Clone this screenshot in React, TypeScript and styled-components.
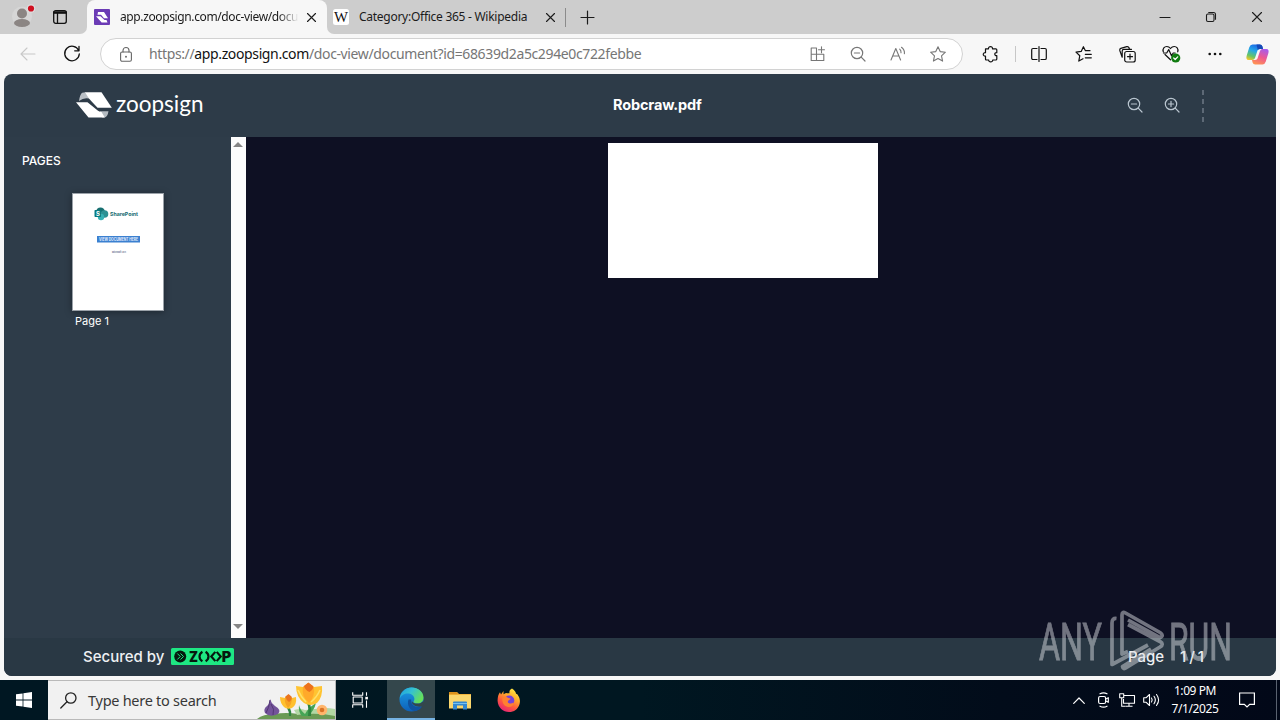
import React from "react";
import styled, { createGlobalStyle, css } from "styled-components";

const system = '"Noto Sans", "Open Sans", sans-serif';
const brand = 'Inter, "Open Sans", sans-serif';

const GlobalStyle = createGlobalStyle`
  *, *::before, *::after { box-sizing: border-box; }
  body { margin: 0; width: 1280px; height: 720px; overflow: hidden; background: #f7f7f7; font-family: ${system}; }
  svg { display: block; flex: none; overflow: visible; }
`;

const Desktop = styled.div`
  position: relative;
  width: 1280px;
  height: 720px;
  display: flex;
  flex-direction: column;
  background: #f7f7f7;
`;

const Slot = styled.div<{ $w: number; $ml?: number }>`
  flex: none;
  width: ${(p) => p.$w}px;
  height: 100%;
  margin-left: ${(p) => p.$ml ?? 0}px;
  display: flex;
  align-items: center;
  justify-content: center;
`;

const Spacer = styled.div`
  flex: 1;
`;

/* Tab strip */

const TabStrip = styled.div`
  flex: none;
  height: 34px;
  display: flex;
  align-items: center;
  background: linear-gradient(90deg, #cdcdcd 80px, #f7f7f7 80px, #f7f7f7 336px, #cdcdcd 336px);
`;

const StripStart = styled.div`
  width: 87px;
  height: 34px;
  flex: none;
  display: flex;
  background: #cdcdcd;
  border-bottom-right-radius: 7px;
`;

const TabBacking = styled.div`
  width: 240px;
  height: 34px;
  flex: none;
  background: linear-gradient(180deg, #cdcdcd 17px, #f7f7f7 17px);
`;

const StripRest = styled.div`
  flex: 1;
  height: 34px;
  display: flex;
  align-items: center;
  background: #cdcdcd;
  border-bottom-left-radius: 7px;
`;

const Tab = styled.div<{ $active?: boolean }>`
  width: 240px;
  height: 34px;
  flex: none;
  display: flex;
  align-items: center;
  padding-left: ${(p) => (p.$active ? 7 : 6)}px;
  border-radius: 8px 8px 0 0;
  background: ${(p) => (p.$active ? "#f7f7f7" : "transparent")};
`;

const TabTitle = styled.div<{ $fade?: boolean }>`
  width: 180px;
  margin-left: 10px;
  overflow: hidden;
  white-space: nowrap;
  font-size: 12px;
  line-height: 18px;
  color: #1b1b1b;
  letter-spacing: ${(p) => (p.$fade ? "-0.38px" : "-0.27px")};
  ${(p) =>
    p.$fade &&
    css`
      mask-image: linear-gradient(90deg, #000 158px, transparent 179px);
    `}
`;

const Divider = styled.div<{ $h: number; $c: string }>`
  flex: none;
  width: 1px;
  height: ${(p) => p.$h}px;
  background: ${(p) => p.$c};
`;

/* Toolbar */

const Toolbar = styled.div`
  flex: none;
  height: 40px;
  display: flex;
  align-items: center;
  padding-left: 6px;
`;

const AddressBar = styled.div`
  flex: none;
  width: 863px;
  height: 32px;
  margin-left: 6px;
  display: flex;
  align-items: center;
  padding: 0 4px 0 13px;
  border: 1px solid #d2d2d2;
  border-radius: 16px;
  background: #fff;
`;

const Url = styled.div`
  flex: 1;
  margin-left: 11px;
  white-space: nowrap;
  font-size: 14px;
  line-height: 20px;
  letter-spacing: -0.37px;
  color: #767676;
  b { font-weight: 400; color: #111; }
`;

/* Document viewer */

const Viewer = styled.main`
  flex: none;
  width: 1272px;
  height: 602px;
  margin: 0 4px 4px;
  display: flex;
  flex-direction: column;
  overflow: hidden;
  border-radius: 8px;
  background: #2d3b48;
  font-family: ${brand};
  color: #fff;
`;

const ViewerHeader = styled.header`
  flex: none;
  height: 63px;
  display: flex;
  align-items: center;
  padding: 0 72px 1px 72px;
`;

const Brand = styled.div`
  width: 537px;
  display: flex;
  align-items: center;
`;

const BrandName = styled.span`
  margin: -2px 0 0 4px;
  font-family: Lato, sans-serif;
  font-size: 22.5px;
  line-height: 30px;
`;

const FileName = styled.h1`
  margin: 0;
  font-size: 14.5px;
  font-weight: 700;
  line-height: 20px;
  letter-spacing: -0.14px;
  white-space: nowrap;
`;

const DashedRule = styled.div`
  width: 2px;
  height: 33px;
  margin: 2px 0 0 12px;
  background: repeating-linear-gradient(180deg, #5d6976 0 5px, transparent 5px 9px);
`;

const ViewerBody = styled.div`
  flex: none;
  height: 501px;
  display: flex;
`;

const Sidebar = styled.aside`
  width: 227px;
  display: flex;
  flex-direction: column;
  padding: 14px 0 0 18px;
  background: #2e3c49;
`;

const SidebarTitle = styled.h2`
  margin: 0;
  font-size: 12px;
  font-weight: 500;
  line-height: 20px;
  letter-spacing: 0;
`;

const Thumb = styled.div`
  width: 92px;
  height: 118px;
  margin: 22px 0 0 50px;
  border: 1px solid #9ba2a9;
  background: #fff;
  box-shadow: 0 1px 7px rgba(0, 0, 0, 0.35);
`;

const ThumbLabel = styled.span`
  margin: 2px 0 0 53px;
  font-size: 11px;
  line-height: 16px;
`;

const ScrollTrack = styled.div`
  width: 15px;
  display: flex;
  flex-direction: column;
  align-items: flex-start;
  justify-content: space-between;
  padding: 5px 0 9px 2px;
  background: #fcfcfc;
`;

const Canvas = styled.section`
  flex: 1;
  padding: 6px 0 0 362px;
  background: #0e1023;
`;

const BlankPage = styled.div`
  width: 270px;
  height: 135px;
  background: #fff;
`;

const ViewerFooter = styled.footer`
  flex: 1;
  display: flex;
  align-items: center;
  padding: 0 71px 1px 79px;
  background: #293844;
  font-size: 15px;
  font-weight: 500;
  line-height: 20px;
  color: #eef0f3;
`;

const SecuredBy = styled.span`
  width: 88px;
  white-space: nowrap;
  letter-spacing: 0;
`;

const PageWord = styled.span`
  width: 52px;
`;

const PageCount = styled.span`
  width: 25px;
  white-space: nowrap;
  letter-spacing: -0.5px;
`;

/* Watermark over the recording */

const Watermark = styled.div`
  position: absolute;
  left: 1036px;
  top: 606px;
  opacity: 0.48;
`;

/* Taskbar */

const Taskbar = styled.div`
  flex: none;
  height: 40px;
  display: flex;
  align-items: center;
  background: linear-gradient(90deg, #001722 0, #001721 640px, #020c1a 1000px, #020818 1280px);
`;

const SearchBox = styled.div`
  width: 288px;
  height: 40px;
  flex: none;
  display: flex;
  align-items: center;
  border: 1px solid #b9b9b9;
  border-left: 0;
  background: #f1f1f1;
`;

const SearchText = styled.span`
  width: 169px;
  font-size: 14.5px;
  line-height: 20px;
  letter-spacing: -0.27px;
  white-space: nowrap;
  color: #383838;
`;

const ActiveApp = styled.div`
  width: 48px;
  height: 40px;
  margin-left: 3px;
  display: flex;
  align-items: center;
  justify-content: center;
  background: #34474c;
  border-bottom: 2px solid #76b3e3;
`;

const Clock = styled.div`
  width: 70px;
  margin-left: -4px;
  text-align: center;
  font-size: 12px;
  line-height: 18px;
  letter-spacing: -0.42px;
  color: #fff;
`;

const ShowDesktop = styled.div`
  width: 4px;
  height: 40px;
  border-left: 1px solid #5a6270;
`;

type IconProps = {
  w?: number;
  h?: number;
  color?: string;
  sw?: number;
  children: React.ReactNode;
};

const Icon = ({ w = 20, h = 20, color = "#1b1b1b", sw = 1.1, children }: IconProps) => (
  <svg
    width={w}
    height={h}
    viewBox={`0 0 ${w} ${h}`}
    fill="none"
    stroke={color}
    strokeWidth={sw}
    strokeLinecap="round"
    strokeLinejoin="round"
  >
    {children}
  </svg>
);

const Close = ({ size = 9 }: { size?: number }) => (
  <Icon w={size} h={size}>
    <path d={`M.5.5l${size - 1} ${size - 1}M${size - 0.5}.5l-${size - 1} ${size - 1}`} />
  </Icon>
);

const ZoomGlyph = ({ plus, color }: { plus?: boolean; color: string }) => (
  <Icon w={16} h={16} color={color} sw={1.2}>
    <circle cx="7" cy="7" r="5.7" />
    <path d="M11.2 11.2l3.8 3.8M4.4 7h5.2" />
    {plus && <path d="M7 4.400v5.200" />}
  </Icon>
);

const LogoMark = () => (
  <svg width="36" height="26" viewBox="0 0 36 26">
    <path d="M3 9Q4 2 6.200.8L9.500.3L15.500 7.500Q9 4.500 3 9z" fill="#b9bfc5" />
    <path d="M9 .3H25.500L35.800 15.700H21.500L14.500 8.300Q13 6.500 12.500 5.800z" fill="#fff" />
    <path d="M24 19.300H32.500Q31.500 25.300 28.500 25.500H26z" fill="#b4bbc1" />
    <path d="M0 10.300H11.500L22 18.800Q23.200 19.800 25.500 20L28.800 25.500H12.500z" fill="#fff" />
  </svg>
);

const EdgeLogo = () => (
  <svg width="25" height="25" viewBox="0 0 25 25">
    <defs>
      <linearGradient id="edgeTop" x1="0" y1="0" x2="1" y2=".5">
        <stop offset="0" stopColor="#1b9de2" />
        <stop offset=".5" stopColor="#35c1d1" />
        <stop offset="1" stopColor="#66df5a" />
      </linearGradient>
      <linearGradient id="edgeBody" x1="0" y1="0" x2="0" y2="1">
        <stop offset="0" stopColor="#1b9ee6" />
        <stop offset="1" stopColor="#0e60b8" />
      </linearGradient>
    </defs>
    <circle cx="12.500" cy="12.500" r="12" fill="url(#edgeBody)" />
    <path d="M.6 12C1.500 5 6.500.5 12.600.5C19.500.5 24.500 5 24.500 10.500c0 4-3 6-6 6c-2.500 0-4-1-4-1.800c0-.6.900-1 .9-2.700C15.400 8.500 12 6.500 8.500 6.500C4.500 6.500 1.500 9 .6 12z" fill="url(#edgeTop)" />
    <path d="M9.500 12.500C7.500 18 11 24 16 24c3 0 6-2.200 7.300-5c-2 1.200-5 1.400-7.300.4c-3-1.200-4.300-4-3.800-6.900z" fill="#10529e" />
    <path d="M13 14.200c.5 1.700 2.800 2.400 5.500 2.300c2.300 0 4.500-.9 6-2.600c.8 2.500.2 4.700-.6 5.200c-2.900 1.400-7.100.7-9.100-1c-1.900-1.500-2.600-3.400-1.800-3.900z" fill="#34474c" />
  </svg>
);

const FirefoxLogo = () => (
  <svg width="24" height="25" viewBox="0 0 24 25">
    <defs>
      <linearGradient id="fox" x1=".8" y1="0" x2=".25" y2="1">
        <stop offset="0" stopColor="#fff044" />
        <stop offset=".35" stopColor="#ffab2b" />
        <stop offset=".65" stopColor="#ff5a3c" />
        <stop offset="1" stopColor="#e52079" />
      </linearGradient>
    </defs>
    <path d="M15 .5c3 2 4 4.200 4 5.200c1.200.4 2 1.100 2.200 2c2 2.800 2 6.300 1.300 8.500C21 21.200 17 24 12 24C6 24 1 19.500.6 13C.5 9 1.500 6 3 4.200l1 2.400L6.500 3v3.200L9 5c1.500.3 2.500.3 3.500.2C12 3 13 1.500 15 .5z" fill="url(#fox)" />
    <circle cx="12.300" cy="12.500" r="5" fill="#7542d8" />
    <path d="M5.500 9.500c2-1.200 4-.6 5.500.2c1 .6 2.500.5 2.500 1c0 1-2 1.200-2.500 2.300c-1 2.500 3 3.500 5.500 1.500c.5 2.500-2 4.500-5 4.500C7.500 19 4.500 15 5.500 9.500z" fill="#ff8130" />
  </svg>
);

const CopilotLogo = () => (
  <svg width="23" height="21" viewBox="0 0 23 21">
    <defs>
      <linearGradient id="cpA" x1=".6" y1="0" x2=".2" y2="1">
        <stop offset="0" stopColor="#1a65e5" />
        <stop offset=".4" stopColor="#25a8e8" />
        <stop offset=".75" stopColor="#67c565" />
        <stop offset="1" stopColor="#f0c72c" />
      </linearGradient>
      <linearGradient id="cpB" x1=".7" y1="0" x2=".3" y2="1">
        <stop offset="0" stopColor="#a95bea" />
        <stop offset=".5" stopColor="#ee5891" />
        <stop offset="1" stopColor="#ff9353" />
      </linearGradient>
    </defs>
    <path d="M6.500.5h7.300q2 0 2.600 2l.6 2.500h-3c-1.800 0-2.400 1-2.900 2.700l-2 6.100C8.500 15.500 7.500 16 6 16H2.500C.5 16 0 14 .6 12L3.200 3.500Q4.200.5 6.500.5z" fill="url(#cpA)" />
    <path d="M16.500 20.500H9.200q-2 0-2.600-2L6 16h3c1.800 0 2.400-1 2.900-2.700l2-6.100C14.500 5.500 15.500 5 17 5h3.500c2 0 2.500 2 1.900 4l-2.600 8.500q-1 3-3.300 3z" fill="url(#cpB)" />
    <path d="M10.500.5h3.300q2 0 2.600 2L17 5h-3c-1 0-1.700.4-2.200 1z" fill="#1748b5" />
  </svg>
);

const Flowers = () => (
  <svg width="78" height="38" viewBox="0 0 78 38">
    <path d="M0 38Q6 33 18 33Q28 31 42 33Q60 30 78 34V38z" fill="#6a9a54" />
    <path d="M37 29Q44 27 48 29L58 28Q68 26 78 28V35Q60 31 40 34z" fill="#b3d7a4" />
    <path d="M42 24q1 5 6 9q3-6 11-11q-2 8-8 13h-6q-4-4-3-11" fill="#46a556" />
    <path d="M51 35q1-8-1-13h3q2 6 1 13M32 35q0-5-2-8h3q2 4 1 8" fill="#2f8540" />
    <path d="M13 18q0 5-3 7q-4 3-2 7q5 5 13 1q4-4-3-8q-4-3-5-7z" fill="#73539a" />
    <path d="M13 19q-1 8-4 13M14 23q4 5 2 11" stroke="#523675" strokeWidth="1" fill="none" />
    <path d="M23 16l5 1l4-3l3 3l4-1q1 8-4 11q-5 2-8-1q-4-4-4-10z" fill="#ffc02f" />
    <path d="M28 16l3-2l4 3q0 6-4 10q-4-5-3-11z" fill="#f6a324" />
    <path d="M28.500 15.500l3-2.500l3 2.500q1 3-2.500 5.500q-3-2-3.500-5.500z" fill="#ea741e" />
    <path d="M39 5l7 1l5-4l6 4l8-1q1 11-5 17q-7 4-13 0q-8-6-8-17z" fill="#ffc331" />
    <path d="M46 6l5-4l6 4q1 10-5 16q-8-7-6-16z" fill="#ffa92a" />
    <path d="M47 5l4.500-3.500L56 5q1 3-3.500 6Q48 9 47 5z" fill="#ec721e" />
    <path d="M41 9q3 7 8 12M63 9q-3 7-9 12" stroke="#ffe06a" strokeWidth="1.600" fill="none" />
    <circle cx="65" cy="29" r="5.300" fill="#ffb56c" />
    <circle cx="65" cy="29" r="2.300" fill="#d97225" />
  </svg>
);

const ZoopBadge = () => (
  <svg width="63" height="17" viewBox="0 0 63 17">
    <rect width="63" height="17" rx="1.500" fill="#1ee783" />
    <circle cx="9.200" cy="8.500" r="6" fill="#06180f" />
    <path d="M6.300 5.500l3 3l-3 3M9.500 5.500l3 3l-3 3" fill="none" stroke="#1ee783" strokeWidth="1" />
    <g fill="none" stroke="#06180f" strokeWidth="2.200">
      <path d="M31.400 3.700q-2.900 1.800-2.900 4.800t2.900 4.800M34.600 3.700q2.900 1.800 2.900 4.800t-2.900 4.800" />
      <path d="M44.300 3.900L40.300 8.500l4 4.600M45.700 3.900l4 4.600l-4 4.600" />
    </g>
    <g fill="#06180f" fontFamily="Inter, sans-serif" fontWeight="900" fontSize="14">
      <text x="18" y="13.600" textLength="9" lengthAdjust="spacingAndGlyphs">Z</text>
      <text x="50.800" y="13.600" textLength="9.500" lengthAdjust="spacingAndGlyphs">P</text>
    </g>
  </svg>
);

const ThumbContent = () => (
  <svg width="90" height="116" viewBox="0 0 90 116">
    <circle cx="27.500" cy="18" r="4.500" fill="#176f70" />
    <circle cx="31.500" cy="20" r="3.800" fill="#2b9093" />
    <circle cx="28" cy="23" r="3.200" fill="#36b0b4" />
    <rect x="21.500" y="16" width="6.500" height="7" rx=".8" fill="#087b80" />
    <text x="23" y="22" fontSize="6" fontWeight="700" fill="#fff">S</text>
    <text x="37" y="22.300" fontSize="5.400" fontWeight="700" fill="#176c71" textLength="28" lengthAdjust="spacingAndGlyphs" fontFamily="Inter">SharePoint</text>
    <rect x="24" y="42" width="43" height="6.500" fill="#3b80d0" />
    <text x="26" y="47" fontSize="4.600" fontWeight="700" fill="#e3efff" textLength="39" lengthAdjust="spacingAndGlyphs" fontFamily="Inter">VIEW DOCUMENT HERE</text>
    <text x="39" y="58.600" fontSize="2.600" fontWeight="700" fill="#6b7390" textLength="14" lengthAdjust="spacingAndGlyphs" fontFamily="Inter">Microsoft 365</text>
  </svg>
);

export default function App() {
  return (
    <>
      <GlobalStyle />
      <Desktop>
        <TabStrip>
          <StripStart>
            <Slot $w={44}>
              <svg width="22" height="24" viewBox="0 0 22 24">
                <circle cx="11" cy="11.500" r="10" fill="#d6d6d6" />
                <circle cx="11" cy="8.500" r="5" fill="#8b8583" />
                <ellipse cx="11" cy="18" rx="8" ry="4" fill="#8b8583" />
                <circle cx="20" cy="3.500" r="4.300" fill="#dedede" />
                <circle cx="20" cy="3.500" r="3.100" fill="#cf1020" />
              </svg>
            </Slot>
            <Slot $w={32}>
              <Icon w={14} h={14} sw={1.3} color="#111">
                <rect x=".7" y=".7" width="12.600" height="12.600" rx="2" />
                <path d="M1 3.200h12M4.500 4v9" />
                <path d="M1 2.200h12" strokeWidth="2" />
              </Icon>
            </Slot>
          </StripStart>
          <TabBacking>
            <Tab $active>
              <svg width="16" height="16" viewBox="0 0 16 16">
                <rect width="16" height="16" rx="1" fill="#6b3bb5" />
                <path d="M2 7.300h4.500l4 3.700h2l1 2.500H7.600zM4 3h6l4 6.200H10L7 5.800H3.500z" fill="#fff" />
              </svg>
              <TabTitle $fade>app.zoopsign.com/doc-view/document</TabTitle>
              <Slot $w={22}>
                <Close />
              </Slot>
            </Tab>
          </TabBacking>
          <StripRest>
            <Tab>
              <svg width="16" height="16" viewBox="0 0 16 16">
                <rect width="16" height="16" rx="2.500" fill="#fff" />
                <text x="1" y="12.700" fontFamily="Liberation Serif, serif" fontSize="14" fill="#111" textLength="14" lengthAdjust="spacingAndGlyphs">W</text>
              </svg>
              <TabTitle>Category:Office 365 - Wikipedia</TabTitle>
              <Slot $w={22}>
                <Close />
              </Slot>
            </Tab>
            <Slot $w={0} $ml={-2} />
            <Divider $h={19} $c="#8b8b8b" />
            <Slot $w={43}>
              <Icon w={13} h={13} sw={1.2}>
                <path d="M6.500 0v13M0 6.500h13" />
              </Icon>
            </Slot>
            <Spacer />
            <Slot $w={46}>
              <Icon w={10} h={10}>
                <path d="M0 5.500h10" />
              </Icon>
            </Slot>
            <Slot $w={46}>
              <Icon w={10} h={10}>
                <rect x=".5" y="2" width="7.500" height="7.500" rx="1.400" />
                <path d="M2.700.5H7.500q2 0 2 2v4.800" />
              </Icon>
            </Slot>
            <Slot $w={46}>
              <Close size={10} />
            </Slot>
          </StripRest>
        </TabStrip>

        <Toolbar>
          <Slot $w={44}>
            <Icon w={16} h={14} color="#c8c8c8">
              <path d="M15 7H1M7 1L1 7l6 6" />
            </Icon>
          </Slot>
          <Slot $w={44}>
            <Icon w={16} h={16} sw={1.3} color="#111">
              <path d="M14.700 4.500A7.300 7.300 0 1 0 15.300 8M15 .5v4.300h-4.300" />
            </Icon>
          </Slot>
          <AddressBar>
            <Slot $w={24}>
              <Icon w={12} h={15} color="#666">
                <rect x=".6" y="5" width="10.800" height="9.300" rx="1.500" />
                <path d="M3 5V3.500a3 3 0 0 1 6 0V5" />
                <circle cx="6" cy="9.700" r=".4" fill="#666" />
              </Icon>
            </Slot>
            <Url>
              https://<b>app.zoopsign.com</b>/doc-view/document?id=68639d2a5c294e0c722febbe
            </Url>
            <Slot $w={40}>
              <Icon w={16} h={16} color="#777">
                <path d="M1.200 2h5.300v12.500H1.200zM1.200 8.300h12.600v6.200H6.500V8.300M11.500.8v6M8.500 3.800h6" />
              </Icon>
            </Slot>
            <Slot $w={40}>
              <ZoomGlyph color="#777" />
            </Slot>
            <Slot $w={40}>
              <Icon w={16} h={16} color="#777">
                <path d="M1 14L5.800 2.500L10.600 14M2.700 10h6.200M9.700 3.200q1.600 1.500 1.300 3.600M11.500 1.300q3.400 2.700 2.900 6.500" />
              </Icon>
            </Slot>
            <Slot $w={40}>
              <Icon w={16} h={16} color="#777">
                <path d="M8 .7l2.200 4.900l5.200.6l-3.900 3.600l1.100 5.300L8 12.500l-4.600 2.600l1.100-5.300L.6 6.200l5.200-.6z" />
              </Icon>
            </Slot>
          </AddressBar>
          <Slot $w={44} $ml={6}>
            <Icon w={16} h={16} color="#111" sw={1.200}>
              <path d="M2.500 2.800h3c-.4-3 4.400-3 4 0h3.300q1 0 1 1v2.900c-2.700-.5-2.700 3.300 0 2.900v3.400q0 1-1 1H9.700c.4 2.500-4.400 2.500-4 0h-2.200q-1 0-1-1V10c-3 .4-3-3.700 0-3.300z" />
            </Icon>
          </Slot>
          <Slot $w={4}>
            <Divider $h={16} $c="#c7c7c7" />
          </Slot>
          <Slot $w={44}>
            <Icon w={16} h={16} color="#111" sw={1.200}>
              <path d="M6 2.500H2q-1.300 0-1.300 1.300v8.400Q.7 13.500 2 13.500h4M10 2.500h4q1.300 0 1.300 1.300v8.400q0 1.300-1.300 1.300h-4M8 .5v15" />
            </Icon>
          </Slot>
          <Slot $w={44}>
            <Icon w={17} h={16} color="#111" sw={1.200}>
              <path d="M15 4.700h-4.600L8.400.7L6.200 5.400L1 6.100l3.800 3.600l-1 5.400L8 12.700M10.300 8.300h6M10.300 11.800h6" />
            </Icon>
          </Slot>
          <Slot $w={44}>
            <Icon w={17} h={17} color="#111" sw={1.200}>
              <rect x="5.700" y="5.500" width="10.500" height="10.500" rx="2" />
              <path d="M11 8.200v5M8.500 10.700h5M3.200 11.200L.8 4.500q-.4-1.600 1-2.100l6-1.800q1.700-.3 2.200 1.200l.5 1.500M3.200 11.200V5q0-1.700 1.700-1.700h7.600" />
            </Icon>
          </Slot>
          <Slot $w={44}>
            <Icon w={18} h={18} color="#111" sw={1.200}>
              <path d="M1.300 6.800C.3 3.500 2.500 1.500 4.800 1.500c1.800 0 2.900 1 3.700 2c.8-1 1.900-2 3.700-2c2.300 0 4.500 2 3.500 5.300M3 9.500l5.500 5.300M1.500 8h3.200l2-3.400l2.800 6.200L11.200 8h2" />
              <circle cx="13.700" cy="13" r="4.600" fill="#107c10" stroke="none" />
              <path d="M11.700 13l1.500 1.500l2.500-2.700" stroke="#fff" />
            </Icon>
          </Slot>
          <Slot $w={44}>
            <Icon w={14} h={4} color="none">
              <g fill="#111">
                <circle cx="1.700" cy="2" r="1.300" />
                <circle cx="7" cy="2" r="1.300" />
                <circle cx="12.300" cy="2" r="1.300" />
              </g>
            </Icon>
          </Slot>
          <Slot $w={40}>
            <CopilotLogo />
          </Slot>
        </Toolbar>

        <Viewer>
          <ViewerHeader>
            <Brand>
              <LogoMark />
              <BrandName>zoopsign</BrandName>
            </Brand>
            <FileName>Robcraw.pdf</FileName>
            <Spacer />
            <Slot $w={37}>
              <ZoomGlyph color="#b9c5cf" />
            </Slot>
            <Slot $w={37}>
              <ZoomGlyph plus color="#b9c5cf" />
            </Slot>
            <DashedRule />
          </ViewerHeader>
          <ViewerBody>
            <Sidebar>
              <SidebarTitle>PAGES</SidebarTitle>
              <Thumb>
                <ThumbContent />
              </Thumb>
              <ThumbLabel>Page 1</ThumbLabel>
            </Sidebar>
            <ScrollTrack>
              <svg width="10" height="5" viewBox="0 0 10 5">
                <path d="M0 5l5-5l5 5z" fill="#858585" />
              </svg>
              <svg width="10" height="5" viewBox="0 0 10 5">
                <path d="M0 0l5 5l5-5z" fill="#858585" />
              </svg>
            </ScrollTrack>
            <Canvas>
              <BlankPage />
            </Canvas>
          </ViewerBody>
          <ViewerFooter>
            <SecuredBy>Secured by</SecuredBy>
            <ZoopBadge />
            <Spacer />
            <PageWord>Page</PageWord>
            <PageCount>1 / 1</PageCount>
          </ViewerFooter>
        </Viewer>

        <Taskbar>
          <Slot $w={48}>
            <svg width="16" height="16" viewBox="0 0 16 16" fill="#fff">
              <path d="M0 2.300l6.600-.9v6.200H0zM7.400 1.200L16 0v7.600H7.400zM0 8.400h6.600v6.200L0 13.700zM7.400 8.400H16V16l-8.600-1.200z" />
            </svg>
          </Slot>
          <SearchBox>
            <Slot $w={40}>
              <Icon w={17} h={17} color="#222" sw={1.300}>
                <circle cx="10.800" cy="6" r="5.200" />
                <path d="M7 9.800L.8 16" />
              </Icon>
            </Slot>
            <SearchText>Type here to search</SearchText>
            <Flowers />
          </SearchBox>
          <Slot $w={48}>
            <Icon w={17} h={16} color="#fff">
              <path d="M.7.700v2.500h10V.7M.7 15.300v-2.500h10v2.500M1.200 5v6h9V5zM14.500.7v2.600M14.500 9v6.300" strokeLinecap="square" />
              <rect x="13.300" y="4.800" width="2.600" height="2.600" fill="#fff" stroke="none" />
            </Icon>
          </Slot>
          <ActiveApp>
            <EdgeLogo />
          </ActiveApp>
          <Slot $w={50}>
            <svg width="22" height="19" viewBox="0 0 22 19">
              <path d="M0 1h8l2 2h12v14H0z" fill="#f4b63d" />
              <path d="M0 1h7.500l2 2.300H0z" fill="#dc921b" />
              <path d="M0 4h22v13.500H0z" fill="#fbd76d" />
              <path d="M4 18.500v-7q0-1 1-1h12q1 0 1 1v7h-4v-4H8v4z" fill="#3389d1" />
              <path d="M4 12.500h14" stroke="#79c2ed" />
            </svg>
          </Slot>
          <Slot $w={48}>
            <FirefoxLogo />
          </Slot>
          <Spacer />
          <Slot $w={24}>
            <Icon w={12} h={7} color="#fff" sw={1.200}>
              <path d="M.7 6.300L6 1l5.300 5.300" />
            </Icon>
          </Slot>
          <Slot $w={24}>
            <Icon w={11} h={16} color="#fff" sw={1.200}>
              <rect x=".6" y="4.500" width="7" height="7" rx="1.500" />
              <path d="M7.800 7l2.500-1.300v4.600L7.800 9M2 1.800q3.500-2 7 0M2 14.200q3.500 2 7 0" />
            </Icon>
          </Slot>
          <Slot $w={24}>
            <Icon w={16} h={14} color="#fff">
              <path d="M5.500 2.500h10v7.700H4.500V6.500M10 10.500v2.700M7 13.300h6M.7.700h4v4h-4zM2.700 5v8.300h3" strokeLinecap="square" />
            </Icon>
          </Slot>
          <Slot $w={24}>
            <Icon w={17} h={14} color="#fff">
              <path d="M.7 4.700h2.500L6.500 1.500v11L3.200 9.300H.7zM8.500 5q1.400 2 0 4M11 3.300q2.700 3.700 0 7.400M13.500 1.500q4.200 5.500 0 11" />
            </Icon>
          </Slot>
          <Slot $w={1} />
          <Clock>
            1:09 PM
            <br />
            7/1/2025
          </Clock>
          <Slot $w={34}>
            <Icon w={16} h={16} color="#fff" sw={1.200}>
              <path d="M.6 1h14.800v11.300h-4.700L8 15l-2.700-2.700H.6z" strokeLinejoin="miter" />
            </Icon>
          </Slot>
          <Slot $w={12} />
          <ShowDesktop />
        </Taskbar>

        <Watermark>
          <svg width="200" height="68" viewBox="0 0 200 68">
            <g fill="#dfe1e6" stroke="#dfe1e6" strokeWidth="0.900" fontFamily="Roboto, sans-serif" fontSize="52.500">
              <text x="3" y="53.500" textLength="63" lengthAdjust="spacingAndGlyphs">ANY</text>
              <text x="133" y="53.500" textLength="63" lengthAdjust="spacingAndGlyphs">RUN</text>
            </g>
            <path
              d="M80.500 12.500Q76 12 76 17V58.500L112 39M92 45.500L86 48V9Q86 5 89.500 7L124 26.500Q128.500 29.500 124 31.500L92 14M92 18.500L124 35.500Q128.500 38 124 41L90.500 61.500Q87 64 86.500 60.500L115 43"
              fill="none"
              stroke="#dfe1e6"
              strokeWidth="3.700"
              strokeLinejoin="round"
            />
          </svg>
        </Watermark>
      </Desktop>
    </>
  );
}
